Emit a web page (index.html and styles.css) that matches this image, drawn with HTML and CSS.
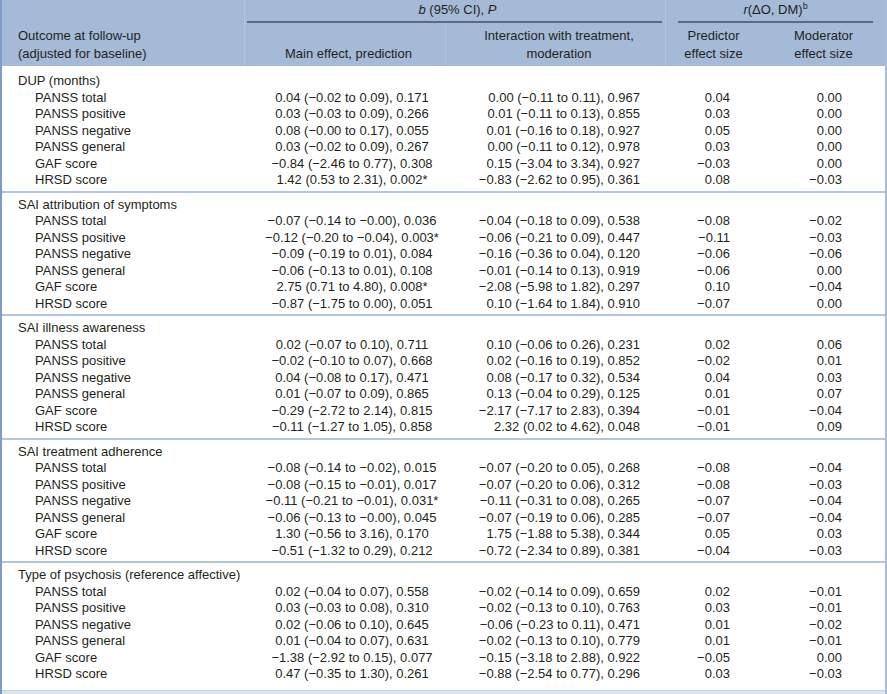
FILE: index.html
```html
<!DOCTYPE html>
<html lang="en">
<head>
<meta charset="utf-8">
<title>Table</title>
<link rel="stylesheet" href="styles.css">
</head>
<body>
<div class="frame">
<table class="tbl">
<colgroup>
<col class="c1"><col class="c2"><col class="c3"><col class="c4"><col class="c5">
</colgroup>
<thead>
<tr class="hr1">
<th rowspan="2" class="h-outcome">Outcome at follow-up<br>(adjusted for baseline)</th>
<th colspan="2" class="h-span h-b vl"><div class="ul ul-b"><i>b</i> (95% CI), <i>P</i></div></th>
<th colspan="2" class="h-span h-r vl"><div class="ul ul-r"><i>r</i>(ΔO, DM)<sup>b</sup></div></th>
</tr>
<tr class="hr2">
<th class="h-sub vl">Main effect, prediction</th>
<th class="h-sub vl">Interaction with treatment,<br>moderation</th>
<th class="h-sub vl">Predictor<br>effect size</th>
<th class="h-sub">Moderator<br>effect size</th>
</tr>
</thead>
<tbody class="sec first">
<tr><td class="lab" colspan="5">DUP (months)</td></tr>
<tr><td class="sub">PANSS total</td><td class="v2">0.04 (−0.02 to 0.09), 0.171</td><td class="v3">0.00 (−0.11 to 0.11), 0.967</td><td class="v4">0.04</td><td class="v5">0.00</td></tr>
<tr><td class="sub">PANSS positive</td><td class="v2">0.03 (−0.03 to 0.09), 0.266</td><td class="v3">0.01 (−0.11 to 0.13), 0.855</td><td class="v4">0.03</td><td class="v5">0.00</td></tr>
<tr><td class="sub">PANSS negative</td><td class="v2">0.08 (−0.00 to 0.17), 0.055</td><td class="v3">0.01 (−0.16 to 0.18), 0.927</td><td class="v4">0.05</td><td class="v5">0.00</td></tr>
<tr><td class="sub">PANSS general</td><td class="v2">0.03 (−0.02 to 0.09), 0.267</td><td class="v3">0.00 (−0.11 to 0.12), 0.978</td><td class="v4">0.03</td><td class="v5">0.00</td></tr>
<tr><td class="sub">GAF score</td><td class="v2">−0.84 (−2.46 to 0.77), 0.308</td><td class="v3">0.15 (−3.04 to 3.34), 0.927</td><td class="v4">−0.03</td><td class="v5">0.00</td></tr>
<tr><td class="sub">HRSD score</td><td class="v2">1.42 (0.53 to 2.31), 0.002*</td><td class="v3">−0.83 (−2.62 to 0.95), 0.361</td><td class="v4">0.08</td><td class="v5">−0.03</td></tr>
</tbody>
<tbody class="sec">
<tr><td class="lab" colspan="5">SAI attribution of symptoms</td></tr>
<tr><td class="sub">PANSS total</td><td class="v2">−0.07 (−0.14 to −0.00), 0.036</td><td class="v3">−0.04 (−0.18 to 0.09), 0.538</td><td class="v4">−0.08</td><td class="v5">−0.02</td></tr>
<tr><td class="sub">PANSS positive</td><td class="v2">−0.12 (−0.20 to −0.04), 0.003*</td><td class="v3">−0.06 (−0.21 to 0.09), 0.447</td><td class="v4">−0.11</td><td class="v5">−0.03</td></tr>
<tr><td class="sub">PANSS negative</td><td class="v2">−0.09 (−0.19 to 0.01), 0.084</td><td class="v3">−0.16 (−0.36 to 0.04), 0.120</td><td class="v4">−0.06</td><td class="v5">−0.06</td></tr>
<tr><td class="sub">PANSS general</td><td class="v2">−0.06 (−0.13 to 0.01), 0.108</td><td class="v3">−0.01 (−0.14 to 0.13), 0.919</td><td class="v4">−0.06</td><td class="v5">0.00</td></tr>
<tr><td class="sub">GAF score</td><td class="v2">2.75 (0.71 to 4.80), 0.008*</td><td class="v3">−2.08 (−5.98 to 1.82), 0.297</td><td class="v4">0.10</td><td class="v5">−0.04</td></tr>
<tr><td class="sub">HRSD score</td><td class="v2">−0.87 (−1.75 to 0.00), 0.051</td><td class="v3">0.10 (−1.64 to 1.84), 0.910</td><td class="v4">−0.07</td><td class="v5">0.00</td></tr>
</tbody>
<tbody class="sec">
<tr><td class="lab" colspan="5">SAI illness awareness</td></tr>
<tr><td class="sub">PANSS total</td><td class="v2">0.02 (−0.07 to 0.10), 0.711</td><td class="v3">0.10 (−0.06 to 0.26), 0.231</td><td class="v4">0.02</td><td class="v5">0.06</td></tr>
<tr><td class="sub">PANSS positive</td><td class="v2">−0.02 (−0.10 to 0.07), 0.668</td><td class="v3">0.02 (−0.16 to 0.19), 0.852</td><td class="v4">−0.02</td><td class="v5">0.01</td></tr>
<tr><td class="sub">PANSS negative</td><td class="v2">0.04 (−0.08 to 0.17), 0.471</td><td class="v3">0.08 (−0.17 to 0.32), 0.534</td><td class="v4">0.04</td><td class="v5">0.03</td></tr>
<tr><td class="sub">PANSS general</td><td class="v2">0.01 (−0.07 to 0.09), 0.865</td><td class="v3">0.13 (−0.04 to 0.29), 0.125</td><td class="v4">0.01</td><td class="v5">0.07</td></tr>
<tr><td class="sub">GAF score</td><td class="v2">−0.29 (−2.72 to 2.14), 0.815</td><td class="v3">−2.17 (−7.17 to 2.83), 0.394</td><td class="v4">−0.01</td><td class="v5">−0.04</td></tr>
<tr><td class="sub">HRSD score</td><td class="v2">−0.11 (−1.27 to 1.05), 0.858</td><td class="v3">2.32 (0.02 to 4.62), 0.048</td><td class="v4">−0.01</td><td class="v5">0.09</td></tr>
</tbody>
<tbody class="sec">
<tr><td class="lab" colspan="5">SAI treatment adherence</td></tr>
<tr><td class="sub">PANSS total</td><td class="v2">−0.08 (−0.14 to −0.02), 0.015</td><td class="v3">−0.07 (−0.20 to 0.05), 0.268</td><td class="v4">−0.08</td><td class="v5">−0.04</td></tr>
<tr><td class="sub">PANSS positive</td><td class="v2">−0.08 (−0.15 to −0.01), 0.017</td><td class="v3">−0.07 (−0.20 to 0.06), 0.312</td><td class="v4">−0.08</td><td class="v5">−0.03</td></tr>
<tr><td class="sub">PANSS negative</td><td class="v2">−0.11 (−0.21 to −0.01), 0.031*</td><td class="v3">−0.11 (−0.31 to 0.08), 0.265</td><td class="v4">−0.07</td><td class="v5">−0.04</td></tr>
<tr><td class="sub">PANSS general</td><td class="v2">−0.06 (−0.13 to −0.00), 0.045</td><td class="v3">−0.07 (−0.19 to 0.06), 0.285</td><td class="v4">−0.07</td><td class="v5">−0.04</td></tr>
<tr><td class="sub">GAF score</td><td class="v2">1.30 (−0.56 to 3.16), 0.170</td><td class="v3">1.75 (−1.88 to 5.38), 0.344</td><td class="v4">0.05</td><td class="v5">0.03</td></tr>
<tr><td class="sub">HRSD score</td><td class="v2">−0.51 (−1.32 to 0.29), 0.212</td><td class="v3">−0.72 (−2.34 to 0.89), 0.381</td><td class="v4">−0.04</td><td class="v5">−0.03</td></tr>
</tbody>
<tbody class="sec last">
<tr><td class="lab" colspan="5">Type of psychosis (reference affective)</td></tr>
<tr><td class="sub">PANSS total</td><td class="v2">0.02 (−0.04 to 0.07), 0.558</td><td class="v3">−0.02 (−0.14 to 0.09), 0.659</td><td class="v4">0.02</td><td class="v5">−0.01</td></tr>
<tr><td class="sub">PANSS positive</td><td class="v2">0.03 (−0.03 to 0.08), 0.310</td><td class="v3">−0.02 (−0.13 to 0.10), 0.763</td><td class="v4">0.03</td><td class="v5">−0.01</td></tr>
<tr><td class="sub">PANSS negative</td><td class="v2">0.02 (−0.06 to 0.10), 0.645</td><td class="v3">−0.06 (−0.23 to 0.11), 0.471</td><td class="v4">0.01</td><td class="v5">−0.02</td></tr>
<tr><td class="sub">PANSS general</td><td class="v2">0.01 (−0.04 to 0.07), 0.631</td><td class="v3">−0.02 (−0.13 to 0.10), 0.779</td><td class="v4">0.01</td><td class="v5">−0.01</td></tr>
<tr><td class="sub">GAF score</td><td class="v2">−1.38 (−2.92 to 0.15), 0.077</td><td class="v3">−0.15 (−3.18 to 2.88), 0.922</td><td class="v4">−0.05</td><td class="v5">0.00</td></tr>
<tr><td class="sub">HRSD score</td><td class="v2">0.47 (−0.35 to 1.30), 0.261</td><td class="v3">−0.88 (−2.54 to 0.77), 0.296</td><td class="v4">0.03</td><td class="v5">−0.03</td></tr>
</tbody>
</table>
<div class="band"></div>
</div>
</body>
</html>
```

FILE: styles.css
```css
html, body {
  margin: 0;
  padding: 0;
  background: #ffffff;
}

body {
  font-family: "Liberation Sans", Arial, sans-serif;
  font-size: 13px;
  color: #231f20;
}

.frame {
  width: 883px;
  height: 694px;
  border-left: 2px solid #7f9cc6;
  border-right: 2px solid #a7bcd9;
  overflow: hidden;
}

.tbl {
  width: 883px;
  border-collapse: collapse;
  table-layout: fixed;
}

.c1 { width: 242px; }
.c2 { width: 201px; }
.c3 { width: 220px; }
.c4 { width: 89px; }
.c5 { width: 131px; }

thead th {
  background: #a5bad7;
  font-weight: normal;
  padding: 0;
  color: #231f20;
}

.hr1 th.h-span {
  height: 23px;
  vertical-align: top;
  line-height: 16px;
}

.vl {
  box-shadow: inset 1px 0 0 #b3c5de;
}

.ul {
  padding-top: 2px;
  padding-bottom: 3px;
  border-bottom: 2px solid #5b6a7f;
  text-align: center;
}

.ul-b {
  margin: 0 3px 0 3px;
  padding-left: 6px;
}

.ul-r {
  margin: 0 12px 0 13px;
}

.ul sup {
  font-size: 9px;
  line-height: 0;
  vertical-align: 5px;
}

.h-outcome {
  text-align: left;
  vertical-align: bottom;
  line-height: 18px;
  padding: 0 0 3px 16px !important;
}

.hr2 th.h-sub {
  height: 40px;
  vertical-align: bottom;
  line-height: 18px;
  padding: 0 0 3px 8px;
  text-align: center;
}

tbody td {
  padding: 0;
  line-height: 16.5px;
  height: 16.5px;
  white-space: nowrap;
}

.sec {
  border-bottom: 2px solid #b2c6e0;
}

.sec tr:first-child td {
  padding-top: 4px;
}

.sec tr:last-child td {
  padding-bottom: 2px;
}

.sec.first tr:first-child td {
  padding-top: 7px;
}

.sec.last {
  border-bottom: none;
}

.sec.last tr:last-child td {
  padding-bottom: 7px;
}

.lab {
  padding-left: 16px !important;
  text-align: left;
}

.sub {
  padding-left: 33px !important;
  text-align: left;
}

.v2 {
  text-align: center;
  padding-left: 15px !important;
}

.v3 {
  text-align: right;
  padding-right: 25px !important;
}

.v4 {
  text-align: right;
  padding-right: 24px !important;
}

.v5 {
  text-align: right;
  padding-right: 43px !important;
}

.band {
  height: 10px;
  background: #dbe4f0;
  border-top: 1px solid #c3d3e7;
}
```
